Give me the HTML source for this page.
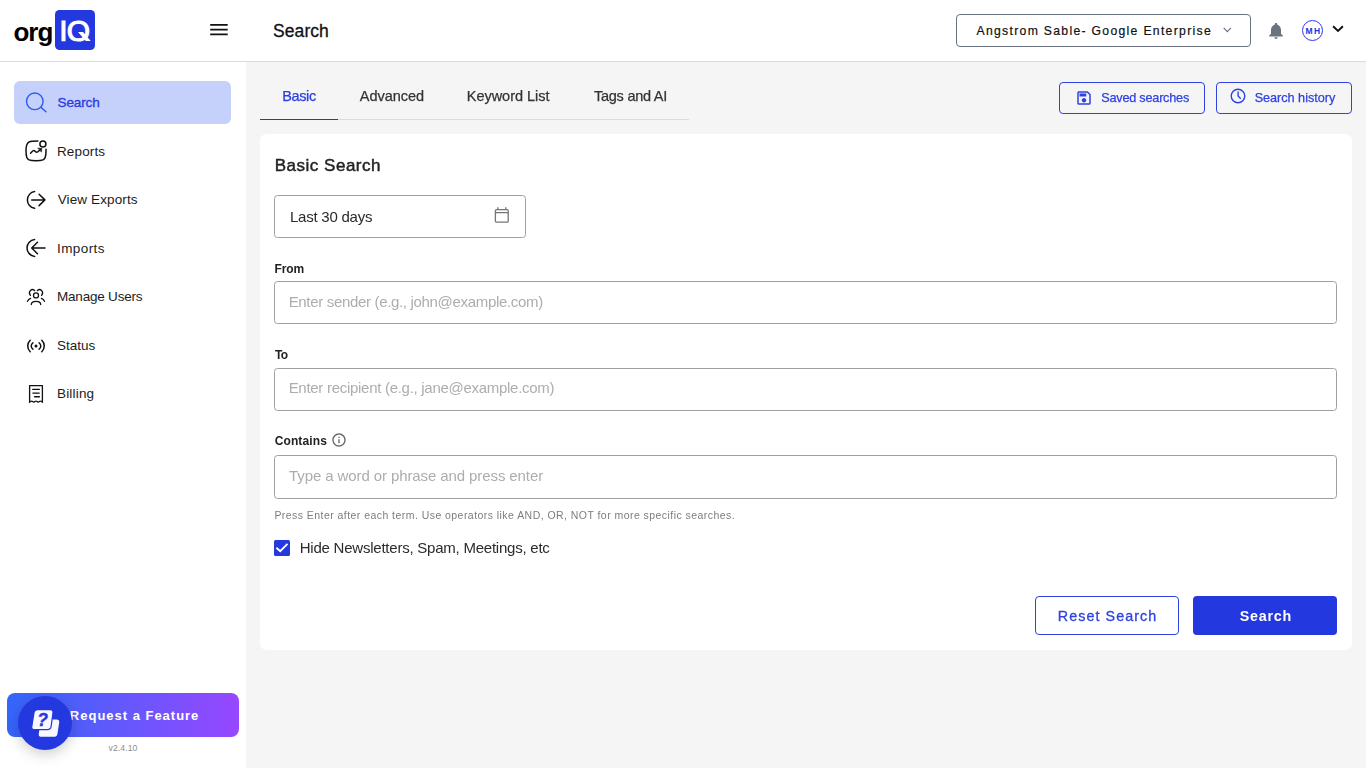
<!DOCTYPE html>
<html lang="en">
<head>
<meta charset="utf-8">
<title>Search</title>
<style>
*{box-sizing:border-box;margin:0;padding:0}
html,body{width:1366px;height:768px;overflow:hidden;background:#f5f5f5;font-family:"Liberation Sans",sans-serif;color:#1c1c1c}
.abs{position:absolute}
#header{position:absolute;left:0;top:0;width:1366px;height:62px;background:#fff;border-bottom:1px solid #dcdcdc}
#sidebar{position:absolute;left:0;top:62px;width:246px;height:706px;background:#fff}
.t{position:absolute;white-space:nowrap;line-height:1}
.g{transform:translateZ(0)}
svg{position:absolute;overflow:visible}
.nav{position:absolute;left:58px;font-size:14px;white-space:nowrap;line-height:16px;color:#1c1c1c;letter-spacing:.1px}
.inp{position:absolute;left:274px;width:1063px;background:#fff;border:1px solid #a0a0a0;border-radius:3.500px}
.ph{position:absolute;left:289px;font-size:15px;color:#a9a9a9;white-space:nowrap;line-height:18px;letter-spacing:.1px}
.lbl{position:absolute;left:274px;font-size:13px;font-weight:bold;color:#222;white-space:nowrap;line-height:16px}
.tab{position:absolute;font-size:15px;white-space:nowrap;line-height:18px;color:#2b2b2b}
.obtn{position:absolute;height:32px;border:1px solid #2f42e2;border-radius:4px;top:82px}
</style>
</head>
<body>
<div id="header">
  <div class="t" id="logo-org" style="left:13.38px;top:19.00px;font-size:26px;font-weight:bold;color:#000;letter-spacing:-0.925px;">org</div>
  <div class="abs" style="left:55px;top:10px;width:40px;height:40px;border-radius:4.5px;background:#2438e0"></div>
  <div class="t" id="logo-iq" style="left:59.13px;top:16.00px;font-size:30px;color:#fff;letter-spacing:-0.775px;-webkit-text-stroke:1.05px #fff;paint-order:stroke fill;clip-path:inset(0 -2px 4.60px -2px);">IQ</div>
  <div class="abs" id="qtail" style="left:78px;top:31.5px;width:5.2px;height:9.3px;background:#fff;transform-origin:0 0;transform:skewX(40.7deg)"></div>
  <svg style="left:210px;top:23px" width="18" height="13" viewBox="0 0 18 13"><path d="M0.2 1.900H17.700M0.2 6.600H17.700M0.2 11.300H17.700" stroke="#111" stroke-width="1.750" fill="none"/></svg>
  <div class="t" id="h-title" style="left:273.00px;top:23.00px;font-size:17.5px;color:#111;letter-spacing:0.080px;-webkit-text-stroke:.3px #111;">Search</div>
  <div class="abs" style="left:956px;top:14px;width:295px;height:33px;border:1px solid #6b7280;border-radius:4px"></div>
  <div class="t" id="h-org" style="left:976.50px;top:25.00px;font-size:12.2px;color:#111;letter-spacing:1.307px;-webkit-text-stroke:.2px #111;">Angstrom Sable- Google Enterprise</div>
  <svg style="left:1223px;top:27px" width="9" height="6" viewBox="0 0 9 6"><path d="M0.7 0.9L4.3 4.7L7.900 0.9" stroke="#6b7280" stroke-width="1.200" fill="none"/></svg>
  <svg style="left:1268px;top:22px" width="16" height="18" viewBox="0 0 16 18"><path d="M8 1.100c-.8 0-1.300.5-1.300 1.200v.5C4.300 3.500 3 5.500 3 8v3.800L1.200 13.600v.8h13.600v-.8L13 11.800V8c0-2.500-1.300-4.500-3.700-5.200v-.5c0-.7-.5-1.200-1.300-1.200zM6.400 15.300c0 .9.700 1.600 1.600 1.600s1.600-.7 1.600-1.600z" fill="#6b7280"/></svg>
  <div class="abs" style="left:1301.800px;top:19.800px;width:21px;height:21px;border:1.600px solid #2b38ee;border-radius:50%"></div>
  <div class="t" id="h-mh" style="left:1305.62px;top:27.00px;font-size:8.5px;font-weight:bold;color:#2336e0;letter-spacing:1.250px;">MH</div>
  <svg style="left:1331.500px;top:25.400px" width="12" height="8" viewBox="0 0 12 8"><path d="M1.100 1.200L6 6L10.900 1.200" stroke="#111" stroke-width="1.900" fill="none"/></svg>
</div>

<div id="sidebar"></div>
<div class="abs" style="left:14px;top:81px;width:217px;height:43px;border-radius:6px;background:#c5d0fb"></div>
<svg style="left:24px;top:91px" width="24" height="24" viewBox="0 0 24 24" fill="none" stroke="#2f5cf0" stroke-width="1.400" stroke-linecap="round"><circle cx="10.800" cy="10.300" r="8.300"/><path d="M17 16.400L22 20.800"/></svg>
<div class="t" id="n1" style="left:57.62px;top:96.00px;font-size:13.5px;color:#2a3de0;letter-spacing:-0.135px;-webkit-text-stroke:.35px #2a3de0;">Search</div>

<svg style="left:24px;top:139px" width="24" height="24" viewBox="0 0 24 24" fill="none" stroke="#111" stroke-width="1.500" stroke-linecap="round" stroke-linejoin="round"><path d="M13.900 2.100C9 2.100 6.500 2.300 5 3C2.600 4 2 6.500 2 12C2 17.500 2.600 20 5 20.900C6.800 21.600 9 21.700 12 21.700C15 21.700 17.200 21.600 19 20.900C21.400 20 22 17.500 22 12V10.200"/><circle cx="18.900" cy="5" r="3"/><path d="M6.600 14.200C8 12.800 8.800 11.600 9.900 11.600C11 11.600 11.600 13.300 12.800 13.300C13.800 13.300 14.600 12.200 15.600 11.200"/><path d="M14.100 9.100l3.700.4-.4 3.300z" fill="#111" stroke-width=".6"/></svg>
<div class="t" id="n2" style="left:57.00px;top:145.00px;font-size:13.5px;color:#1c1c1c;letter-spacing:0.125px;">Reports</div>

<svg style="left:24px;top:187px" width="24" height="24" viewBox="0 0 24 24" fill="none" stroke="#111" stroke-width="1.500" stroke-linecap="round" stroke-linejoin="round"><path d="M10.600 4.500A8.500 8.500 0 0 0 10.600 21.300"/><path d="M7.700 12.900H20.800M15.100 7.200L20.900 12.900L15.100 18.600"/></svg>
<div class="t" id="n3" style="left:57.75px;top:193.00px;font-size:13.5px;color:#1c1c1c;letter-spacing:0.114px;">View Exports</div>

<svg style="left:24px;top:236px" width="24" height="24" viewBox="0 0 24 24" fill="none" stroke="#111" stroke-width="1.500" stroke-linecap="round" stroke-linejoin="round"><path d="M10.600 3.500A8.500 8.500 0 0 0 10.600 20.400"/><path d="M21 12H7.900M13.500 6.200L7.700 12L13.500 17.800"/></svg>
<div class="t" id="n4" style="left:57.00px;top:242.00px;font-size:13.5px;color:#1c1c1c;letter-spacing:0.413px;">Imports</div>

<svg style="left:26px;top:287px" width="20" height="20" viewBox="0 0 20 20" fill="none" stroke="#111" stroke-width="1.300" stroke-linecap="round" stroke-linejoin="round"><circle cx="10" cy="8.400" r="2.500"/><path d="M5.300 17.500C5.300 15 7 14.300 10 14.300C13 14.300 14.700 15 14.700 17.500"/><path d="M8.600 3.500C7.500 2.600 5.500 2.300 4.300 3.600C3 5 3.200 6.800 4.400 8.400M11.400 3.500C12.500 2.600 14.500 2.300 15.700 3.600C17 5 16.800 6.800 15.600 8.400"/><path d="M4.600 11.300C3.200 11.800 2 13 1.500 14.400M15.400 11.300C16.800 11.800 18 13 18.500 14.400"/></svg>
<div class="t" id="n5" style="left:57.00px;top:290.00px;font-size:13.5px;color:#1c1c1c;letter-spacing:-0.205px;">Manage Users</div>

<svg style="left:26px;top:335.500px" width="20" height="20" viewBox="0 0 20 20" fill="none" stroke="#111" stroke-width="1.500" stroke-linecap="round"><circle cx="10" cy="10" r="1.500" fill="#111" stroke="none"/><path d="M6.900 6.800A3.900 3.900 0 0 0 6.900 13.200M13.100 6.800A3.900 3.900 0 0 1 13.100 13.200M4.200 4.200A8.100 8.100 0 0 0 4.200 15.800M15.800 4.200A8.100 8.100 0 0 1 15.800 15.800"/></svg>
<div class="t" id="n6" style="left:57.12px;top:339.00px;font-size:13.5px;color:#1c1c1c;letter-spacing:-0.010px;">Status</div>

<svg style="left:27px;top:384px" width="18" height="20" viewBox="0 0 18 20" fill="none" stroke="#111" stroke-width="1.300" stroke-linejoin="round"><path d="M2.600 18.300V1.700H15.400V18.300L14.500 17.500Q13.400 16.600 12.300 17.500L11.700 18Q11.200 18.400 10.700 18L10.100 17.500Q9 16.600 7.900 17.500L7.300 18Q6.800 18.400 6.300 18L5.700 17.500Q4.600 16.600 3.500 17.500Z"/><path d="M5.700 5.300H12.400M5.900 9.100H12.200M7.600 12.750H12.400" stroke-linecap="round"/></svg>
<div class="t" id="n7" style="left:57.00px;top:387.00px;font-size:13.5px;color:#1c1c1c;letter-spacing:0.179px;">Billing</div>

<div class="abs" style="left:7px;top:693px;width:232px;height:44px;border-radius:8px;background:linear-gradient(90deg,#3466fa 0%,#6458fc 50%,#9747ff 100%)"></div>
<div class="t" id="raf" style="left:69.87px;top:709.00px;font-size:13px;font-weight:bold;color:#fff;letter-spacing:0.986px;">Request a Feature</div>
<div class="abs" style="left:18px;top:696px;width:54px;height:54px;border-radius:50%;background:#2438e0;box-shadow:0 4px 14px rgba(0,0,0,.2)"></div>
<svg style="left:30px;top:708px" width="30" height="30" viewBox="0 0 30 30"><path d="M10.50 14.61Q11.00 11.45 14.20 11.45L26.50 11.45Q29.70 11.45 29.20 14.61L27.45 25.64Q26.95 28.80 23.75 28.80L11.46 28.80Q8.26 28.80 8.76 25.64Z" fill="#f8f9ff"/><path d="M3.99 4.86Q4.50 1.70 7.70 1.70L20.20 1.70Q23.40 1.70 22.97 4.87L21.13 18.43Q20.70 21.60 17.50 21.60L4.50 21.60Q1.30 21.60 1.81 18.44Z" fill="#f8f9ff" stroke="#2438e0" stroke-width="1.2"/><text x="12.500" y="17.700" font-family="Liberation Sans, sans-serif" font-weight="bold" font-style="italic" font-size="17.500" text-anchor="middle" fill="#2438e0" stroke="#2438e0" stroke-width=".4">?</text></svg>
<div class="t" id="ver" style="left:108.50px;top:744.00px;font-size:8.7px;color:#8e8e8e;letter-spacing:0.067px;">v2.4.10</div>

<!-- tabs -->
<div class="abs" style="left:260px;top:119px;width:429px;height:1px;background:#dbdbdb"></div>
<div class="abs" style="left:260px;top:118.600px;width:78px;height:1.500px;background:#2336e0"></div>
<div class="t g" id="tab1" style="left:282.13px;top:89.00px;font-size:14.5px;color:#2a3de0;letter-spacing:-0.356px;-webkit-text-stroke:.25px #2a3de0;">Basic</div>
<div class="t g" id="tab2" style="left:359.75px;top:89.00px;font-size:14.5px;color:#333;letter-spacing:-0.021px;-webkit-text-stroke:.25px #333;">Advanced</div>
<div class="t g" id="tab3" style="left:466.75px;top:89.00px;font-size:14.5px;color:#333;letter-spacing:-0.025px;-webkit-text-stroke:.25px #333;">Keyword List</div>
<div class="t g" id="tab4" style="left:594.00px;top:89.00px;font-size:14.5px;color:#333;letter-spacing:-0.252px;-webkit-text-stroke:.25px #333;">Tags and AI</div>

<div class="obtn" style="left:1059px;width:146px"></div>
<svg style="left:1075px;top:89px" width="18" height="18" viewBox="0 0 24 24"><path fill="#2f42e2" d="M17 3H5c-1.110 0-2 .9-2 2v14c0 1.100.890 2 2 2h14c1.100 0 2-.9 2-2V7l-4-4zm2 16H5V5h11.170L19 7.830V19zm-7-7c-1.660 0-3 1.340-3 3s1.340 3 3 3 3-1.340 3-3-1.340-3-3-3zM6 6h9v4H6z"/></svg>
<div class="t g" id="b-saved" style="left:1101.25px;top:92.00px;font-size:12.7px;color:#2f42e2;letter-spacing:-0.231px;-webkit-text-stroke:.25px #2f42e2;">Saved searches</div>
<div class="obtn" style="left:1216px;width:136px"></div>
<svg style="left:1229.400px;top:87.400px" width="18" height="18" viewBox="0 0 18 18" fill="none" stroke="#2f42e2" stroke-width="1.400" stroke-linecap="round" stroke-linejoin="round"><circle cx="9" cy="9" r="6.800"/><path d="M9.100 4.900V8.900L11.300 11.200"/></svg>
<div class="t g" id="b-hist" style="left:1254.63px;top:92.00px;font-size:12.7px;color:#2f42e2;letter-spacing:-0.033px;-webkit-text-stroke:.25px #2f42e2;">Search history</div>

<!-- card -->
<div class="abs" style="left:260px;top:134px;width:1092px;height:516px;background:#fff;border-radius:6.500px"></div>
<div class="t g" id="c-title" style="left:274.75px;top:157.00px;font-size:17px;color:#222;letter-spacing:0.507px;-webkit-text-stroke:.45px #222;">Basic Search</div>

<div class="inp" style="top:195px;width:252px;height:43px"></div>
<div class="t g" id="d-val" style="left:290.00px;top:209.00px;font-size:15px;color:#2a2a2a;letter-spacing:-0.236px;">Last 30 days</div>
<svg style="left:493px;top:206px" width="18" height="18" viewBox="0 0 18 18" fill="none" stroke="#757575" stroke-width="1.300" stroke-linejoin="round"><rect x="2.400" y="3.600" width="12.800" height="12.500" rx="1.200"/><path d="M2.400 6.700H15.200M4.900 1.300V3.600M12.800 1.300V3.600"/></svg>

<div class="t g" id="l-from" style="left:274.38px;top:263.00px;font-size:12px;font-weight:bold;color:#222;letter-spacing:-0.033px;">From</div>
<div class="inp" style="top:281px;height:43px"></div>
<div class="t g" id="p-from" style="left:288.63px;top:294.00px;font-size:15px;color:#adadad;letter-spacing:-0.324px;">Enter sender (e.g., john@example.com)</div>

<div class="t g" id="l-to" style="left:275.00px;top:349.00px;font-size:12px;font-weight:bold;color:#222;letter-spacing:-0.750px;">To</div>
<div class="inp" style="top:368px;height:43px"></div>
<div class="t g" id="p-to" style="left:288.63px;top:380.00px;font-size:15px;color:#adadad;letter-spacing:-0.285px;">Enter recipient (e.g., jane@example.com)</div>

<div class="t g" id="l-con" style="left:274.63px;top:435.00px;font-size:12px;font-weight:bold;color:#222;letter-spacing:0.129px;">Contains</div>
<svg style="left:330.900px;top:432px" width="16" height="16" viewBox="0 0 24 24"><path fill="#666" d="M11 7h2v2h-2zm0 4h2v6h-2zm1-9C6.480 2 2 6.480 2 12s4.480 10 10 10 10-4.480 10-10S17.520 2 12 2zm0 18c-4.410 0-8-3.590-8-8s3.590-8 8-8 8 3.590 8 8-3.590 8-8 8z"/></svg>
<div class="inp" style="top:455px;height:44px"></div>
<div class="t g" id="p-con" style="left:289.00px;top:468.00px;font-size:15px;color:#adadad;letter-spacing:-0.097px;">Type a word or phrase and press enter</div>
<div class="t g" id="help" style="left:274.38px;top:510.00px;font-size:10.5px;color:#7d7d7d;letter-spacing:0.450px;">Press Enter after each term. Use operators like AND, OR, NOT for more specific searches.</div>

<div class="abs" style="left:274px;top:540px;width:16px;height:16px;border-radius:1.500px;background:#2438e0"></div>
<svg style="left:274px;top:540px" width="16" height="16" viewBox="0 0 16 16"><path d="M2.400 7.700L6.200 11.200L13.500 3.900" stroke="#fff" stroke-width="1.850" fill="none"/></svg>
<div class="t g" id="chk" style="left:299.75px;top:540.00px;font-size:15px;color:#2b2b2b;letter-spacing:-0.231px;">Hide Newsletters, Spam, Meetings, etc</div>

<div class="abs" style="left:1035px;top:596px;width:144px;height:39px;border:1px solid #2f42e2;border-radius:4px;background:#fff"></div>
<div class="t g" id="b-reset" style="left:1057.75px;top:609.00px;font-size:14.3px;color:#2f42e2;letter-spacing:1.075px;-webkit-text-stroke:.3px #2f42e2;">Reset Search</div>
<div class="abs" style="left:1193px;top:596px;width:144px;height:39px;border-radius:4px;background:#2438e0"></div>
<div class="t g" id="b-search" style="left:1239.63px;top:609.00px;font-size:14.3px;font-weight:bold;color:#fff;letter-spacing:0.805px;">Search</div>
</body>
</html>
